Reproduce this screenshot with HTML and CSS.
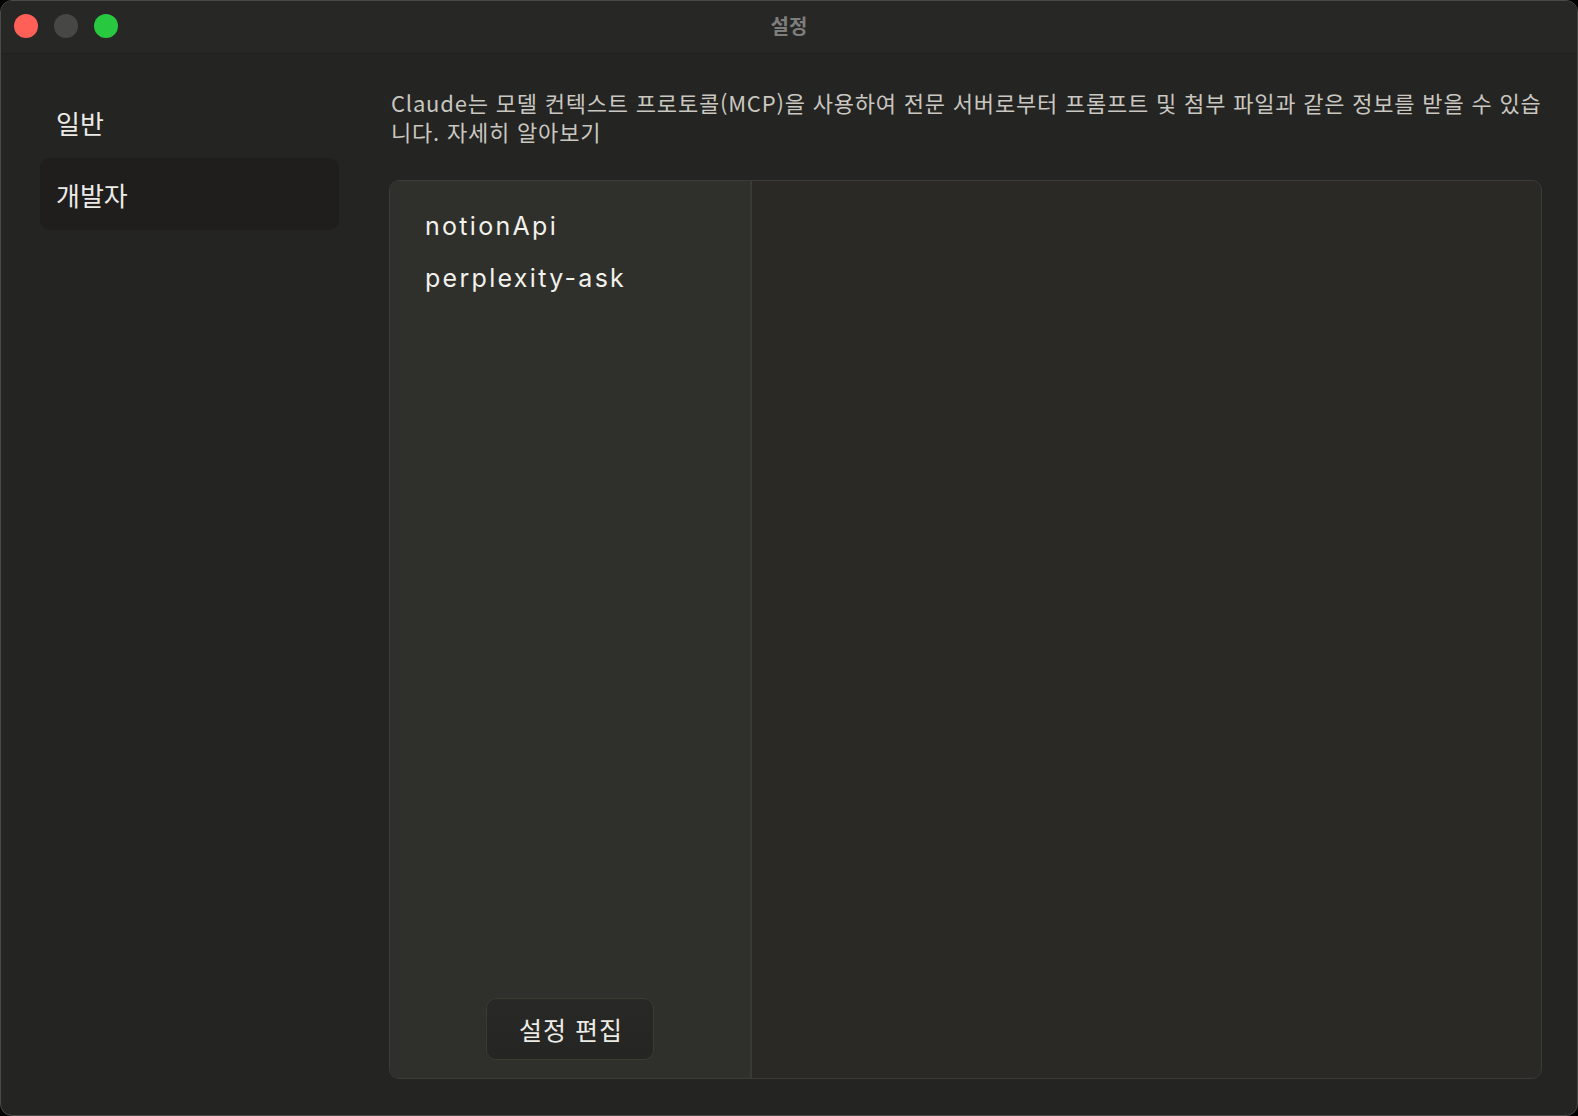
FILE: index.html
```html
<!DOCTYPE html>
<html lang="ko">
<head>
<meta charset="utf-8">
<title>설정</title>
<link rel="stylesheet" href="styles.css">
</head>
<body>
<div class="window">
  <div class="titlebar">
    <div class="lights">
      <span class="light red"></span>
      <span class="light gray"></span>
      <span class="light green"></span>
    </div>
    <div class="title">설정</div>
  </div>
  <div class="content">
    <nav class="sidebar">
      <div class="nav-item">일반</div>
      <div class="nav-item active">개발자</div>
    </nav>
    <main class="main">
      <p class="desc">Claude는 모델 컨텍스트 프로토콜(MCP)을 사용하여 전문 서버로부터 프롬프트 및 첨부 파일과 같은 정보를 받을 수 있습니다. 자세히 알아보기</p>
      <div class="panel">
        <div class="servers">
          <ul class="server-list">
            <li>notionApi</li>
            <li>perplexity-ask</li>
          </ul>
          <div class="btn-row"><button class="edit-btn">설정 편집</button></div>
        </div>
        <div class="detail"></div>
      </div>
    </main>
  </div>
</div>
</body>
</html>
```

FILE: styles.css
```css
html, body {
  margin: 0;
  padding: 0;
  background: #000;
  height: 100%;
}
body {
  font-family: "Noto Sans CJK KR", "Noto Sans", sans-serif;
}
.window {
  box-sizing: border-box;
  width: 1578px;
  height: 1116px;
  background: #242423;
  border: 1px solid #4a4a48;
  border-radius: 12px;
  overflow: hidden;
  display: flex;
  flex-direction: column;
}
.titlebar {
  height: 52px;
  flex: none;
  background: #272726;
  border-bottom: 1px solid #202020;
  position: relative;
  display: flex;
  align-items: center;
  justify-content: center;
}
.lights {
  position: absolute;
  left: 13px;
  top: 13px;
  display: flex;
  gap: 16px;
}
.light {
  width: 24px;
  height: 24px;
  border-radius: 50%;
  display: block;
}
.red { background: #fe5f57; }
.gray { background: #474746; }
.green { background: #28c840; }
.title {
  color: #7e7e7c;
  font-size: 20px;
  font-weight: 700;
  margin-top: -3px;
}
.content {
  flex: 1;
  display: flex;
  min-height: 0;
}
.sidebar {
  width: 299px;
  flex: none;
  padding: 32px 0 0 39px;
  display: flex;
  flex-direction: column;
}
.nav-item {
  height: 72px;
  box-sizing: border-box;
  padding-left: 16px;
  display: flex;
  align-items: center;
  font-size: 26px;
  color: #ecebe6;
  border-radius: 10px;
}
.nav-item.active {
  background: #1f1e1c;
}
.main {
  flex: 1;
  padding: 34px 35px 36px 50px;
  display: flex;
  flex-direction: column;
  min-width: 0;
}
.desc {
  margin: 0 0 34px 0;
  padding-left: 2px;
  font-size: 22px;
  line-height: 29px;
  color: #c9c7c0;
  letter-spacing: 0.8px;
}
.panel {
  flex: 1;
  display: flex;
  border: 1px solid #3b3b38;
  border-radius: 10px;
  overflow: hidden;
  background: #2a2926;
}
.servers {
  width: 360px;
  flex: none;
  background: #2f2f2b;
  border-right: 2px solid #393936;
  display: flex;
  flex-direction: column;
}
.server-list {
  list-style: none;
  margin: 0;
  padding: 19px 0 0 35px;
  flex: 1;
}
.server-list li {
  font-family: "Inter", "Noto Sans", sans-serif;
  font-size: 25px;
  line-height: 52px;
  color: #f2f1ec;
  letter-spacing: 2.3px;
}
.btn-row {
  display: flex;
  justify-content: center;
  padding-bottom: 18px;
}
.edit-btn {
  width: 168px;
  height: 62px;
  border-radius: 10px;
  border: 1px solid #3b3b2e;
  background: linear-gradient(#282826, #252523);
  color: #ecebe6;
  font-family: "Noto Sans CJK KR", sans-serif;
  font-size: 25px;
  letter-spacing: 1px;
  padding: 0 0 0 2px;
}
.detail {
  flex: 1;
}
```
